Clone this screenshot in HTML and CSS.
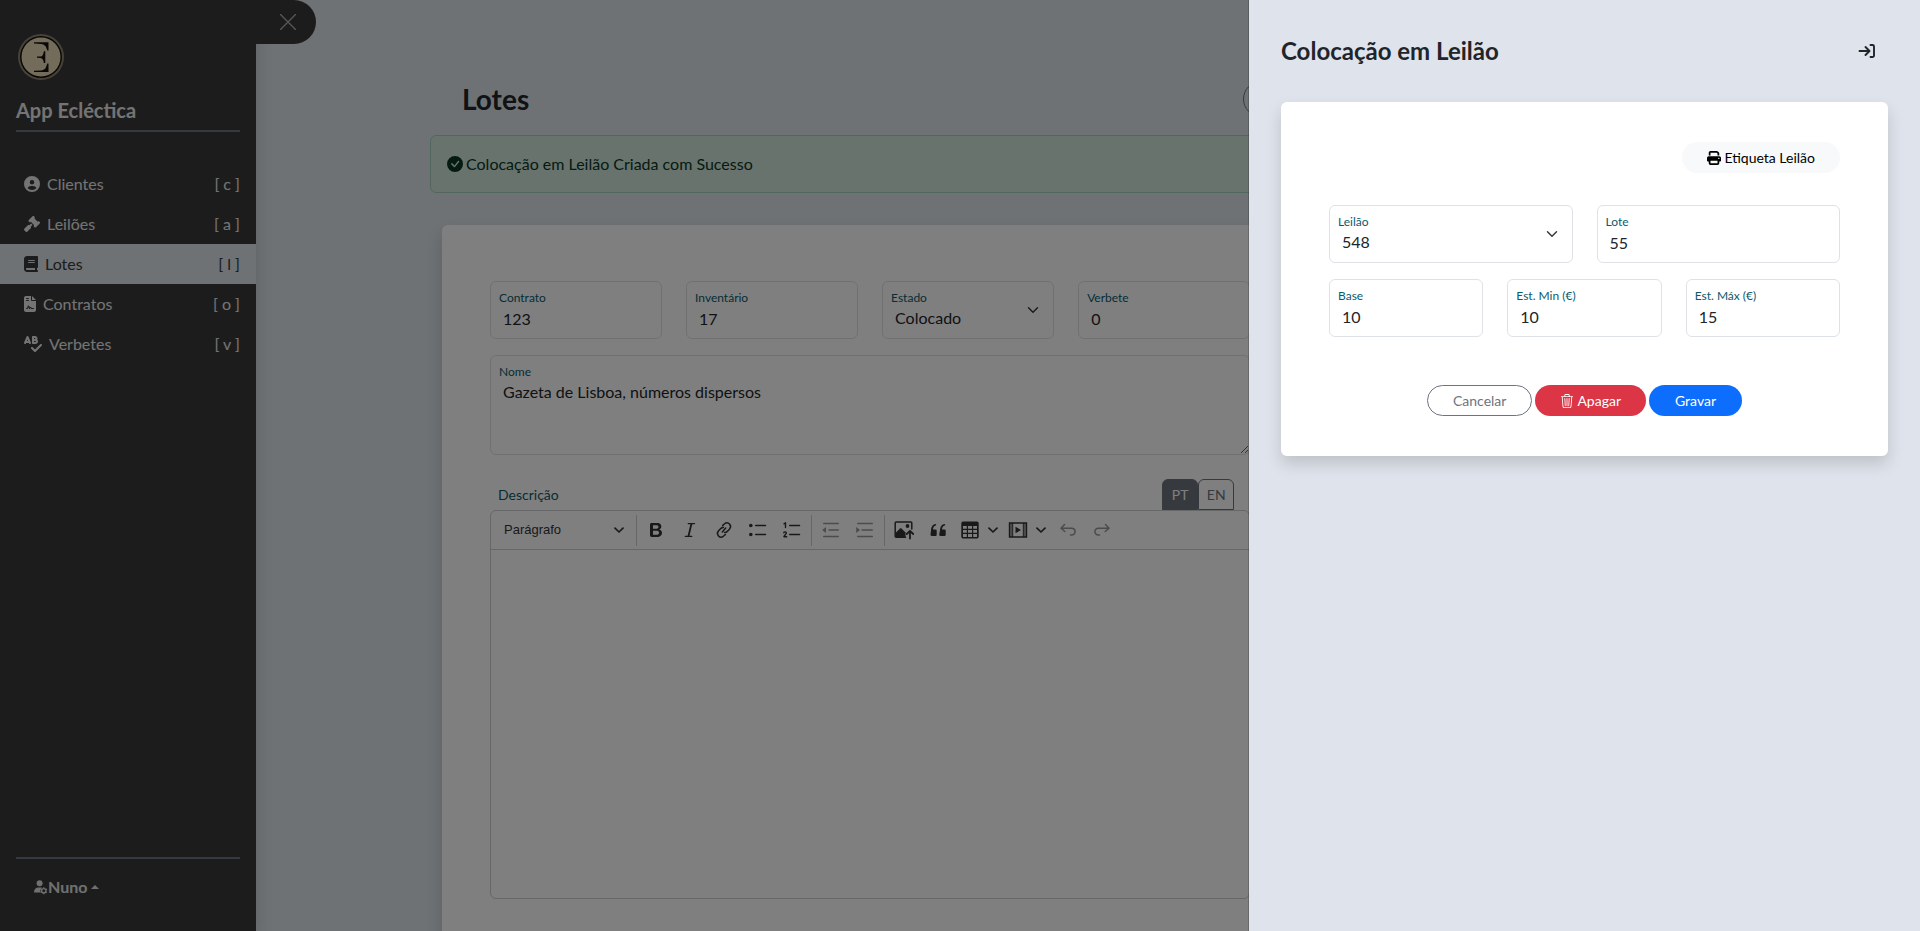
FILE: index.html
```html
<!DOCTYPE html>
<html lang="pt">
<head>
<meta charset="utf-8">
<title>App Ecléctica</title>
<meta name="viewport" content="width=device-width, initial-scale=1">
<link rel="stylesheet" href="styles.css">
</head>
<body>
<div class="app">
  <aside class="sidebar">
    <svg class="logo" viewBox="0 0 46 46" aria-hidden="true">
      <circle cx="23" cy="23" r="23" fill="#8f8571"/>
      <circle cx="23" cy="23" r="21" fill="#14110c"/>
      <circle cx="23" cy="23" r="19.500" fill="#e8d9b6"/>
      <path d="M16 8.300H30.500V16.500H29.300C28.800 12.500 26.500 10.200 23 9.900L16 9.600ZM16 38H30.500V29.500H29.300C28.800 34 26.500 36.100 23 36.400L16 36.700ZM26.500 9H30.500V16.500H29.300ZM26.500 37H30.500V29.500H29.300ZM19 22.600H22.500C24.500 22.500 25.600 20 25.800 17.200H27.300V29H25.800C25.600 26 24.500 24.200 22.500 24L19 23.800Z" fill="#14110c"/>
    </svg>
    <h2 class="brand">App Ecléctica</h2>
    <nav class="menu">
      <a class="menu-item" href="#clientes">
        <svg width="16" height="16" viewBox="0 0 512 512"><path d="M399 384.200C376.900 345.800 335.400 320 288 320H224c-47.400 0-88.900 25.800-111 64.200c35.200 39.200 86.200 63.800 143 63.800s107.800-24.700 143-63.800zM0 256a256 256 0 1 1 512 0A256 256 0 1 1 0 256zm256 16a72 72 0 1 0 0-144 72 72 0 1 0 0 144z"/></svg>
        <span>Clientes</span><span class="key">[ c ]</span>
      </a>
      <a class="menu-item" href="#leiloes">
        <svg width="16" height="16" viewBox="0 0 512 512"><path d="M318.600 9.400c-12.500-12.500-32.800-12.500-45.300 0l-120 120c-12.500 12.500-12.500 32.800 0 45.300l16 16c12.500 12.500 32.800 12.500 45.300 0l4-4L325.400 293.400l-4 4c-12.500 12.500-12.500 32.800 0 45.300l16 16c12.500 12.500 32.800 12.500 45.300 0l120-120c12.500-12.500 12.500-32.800 0-45.300l-16-16c-12.500-12.500-32.800-12.500-45.300 0l-4 4L330.600 74.600l4-4c12.500-12.500 12.500-32.800 0-45.300l-16-16zm-152 288c-12.500-12.500-32.800-12.500-45.300 0l-112 112c-12.500 12.500-12.500 32.800 0 45.300l48 48c12.500 12.500 32.800 12.500 45.300 0l112-112c12.500-12.500 12.500-32.800 0-45.300l-1.400-1.400L272 285.300 226.700 240 168 298.700l-1.400-1.400z"/></svg>
        <span>Leilões</span><span class="key">[ a ]</span>
      </a>
      <a class="menu-item active" href="#lotes" aria-current="page">
        <svg width="14" height="16" viewBox="0 0 448 512"><path d="M96 0C43 0 0 43 0 96V416c0 53 43 96 96 96H384h32c17.700 0 32-14.300 32-32s-14.300-32-32-32V384c17.700 0 32-14.300 32-32V32c0-17.700-14.300-32-32-32H384 96zm0 384H352v64H96c-17.700 0-32-14.300-32-32s14.300-32 32-32zm32-240c0-8.800 7.200-16 16-16H336c8.800 0 16 7.200 16 16s-7.200 16-16 16H144c-8.800 0-16-7.200-16-16zm16 48H336c8.800 0 16 7.200 16 16s-7.200 16-16 16H144c-8.800 0-16-7.200-16-16s7.200-16 16-16z"/></svg>
        <span>Lotes</span><span class="key">[ l ]</span>
      </a>
      <a class="menu-item" href="#contratos">
        <svg width="12" height="16" viewBox="0 0 384 512"><path d="M64 0C28.700 0 0 28.700 0 64V448c0 35.300 28.700 64 64 64H320c35.300 0 64-28.700 64-64V160H256c-17.700 0-32-14.300-32-32V0H64zM256 0V128H384L256 0zM80 64h64c8.800 0 16 7.200 16 16s-7.200 16-16 16H80c-8.800 0-16-7.200-16-16s7.200-16 16-16zm0 64h64c8.800 0 16 7.200 16 16s-7.200 16-16 16H80c-8.800 0-16-7.200-16-16s7.200-16 16-16zm54.200 253.800c-6.100 20.300-24.800 34.200-46 34.200H80c-8.800 0-16-7.200-16-16s7.200-16 16-16h8.200c7.100 0 13.300-4.600 15.300-11.400l14.900-49.500c3.400-11.300 13.800-19.100 25.600-19.100s22.200 7.700 25.600 19.100l11.600 38.600c7.400-6.200 16.800-9.700 26.800-9.700c15.900 0 30.400 9 37.500 23.200l4.400 8.800H304c8.800 0 16 7.200 16 16s-7.200 16-16 16H240c-6.100 0-11.600-3.400-14.300-8.800l-8.800-17.700c-1.700-3.400-5.100-5.500-8.800-5.500s-7.200 2.100-8.800 5.500l-8.800 17.700c-2.900 5.900-9.200 9.400-15.700 8.800s-12.100-5.100-13.900-11.300L144 349l-9.800 32.800z"/></svg>
        <span>Contratos</span><span class="key">[ o ]</span>
      </a>
      <a class="menu-item" href="#verbetes">
        <svg width="18" height="16" viewBox="0 0 576 512"><path d="M112 0C99.100 0 87.400 7.800 82.500 19.700l-66.700 160-13.300 32c-6.800 16.300 .9 35 17.200 41.800s35-.9 41.800-17.200L66.700 224h90.700l5.100 12.300c6.800 16.300 25.500 24 41.800 17.200s24-25.500 17.200-41.800l-13.300-32-66.700-160C136.600 7.800 124.900 0 112 0zm18.700 160H93.300L112 115.200 130.700 160zM256 32v96 96c0 17.700 14.300 32 32 32h80c44.200 0 80-35.800 80-80c0-23.100-9.800-43.800-25.400-58.400c6-11.200 9.400-24 9.400-37.600c0-44.200-35.800-80-80-80H288c-17.700 0-32 14.300-32 32zm96 64H320V64h32c8.800 0 16 7.200 16 16s-7.200 16-16 16zm-32 64h32 16c8.800 0 16 7.200 16 16s-7.200 16-16 16H320V160zM566.600 310.600c12.500-12.500 12.500-32.800 0-45.300s-32.800-12.500-45.300 0L352 434.700l-73.400-73.400c-12.500-12.500-32.800-12.500-45.300 0s-12.500 32.800 0 45.300l96 96c12.500 12.500 32.800 12.500 45.300 0l192-192z"/></svg>
        <span>Verbetes</span><span class="key">[ v ]</span>
      </a>
    </nav>
    <div class="user">
      <button class="user-btn" type="button">
        <svg width="14" height="16" viewBox="0 0 15 16"><circle cx="6" cy="4" r="3.200"/><path d="M0 13.800C0 10.500 2 8.600 5 8.600H7.300C7.900 8.600 8.200 8.700 8.500 8.900C7 10.200 6.600 12 7.100 13.800Z"/><circle cx="10.500" cy="12" r="2.300" fill="none" stroke="currentColor" stroke-width="1.400"/><path d="M10.500 8.200V9.600M10.500 14.400V15.800M7.200 10.100L8.400 10.800M12.600 13.200L13.800 13.900M7.200 13.900L8.400 13.200M12.600 10.800L13.800 10.100" stroke="currentColor" stroke-width="1.400"/></svg>
        <span>Nuno</span><i class="caret"></i>
      </button>
    </div>
  </aside>
  <button class="sidebar-toggle" type="button" aria-label="Fechar menu">
    <svg width="16" height="16" viewBox="0 0 16 16"><path d="M.5.500L15.500 15.500M15.500.500L.5 15.500" stroke="currentColor" stroke-width="1.400" stroke-linecap="round"/></svg>
  </button>

  <main class="main">
    <div class="container">
      <header class="page-head">
        <h1 class="page-title">Lotes</h1>
        <div><button class="round-btn" type="button" aria-label="Opções"></button></div>
      </header>
      <div class="alert" role="alert">
        <svg width="16" height="16" viewBox="0 0 16 16"><path d="M16 8A8 8 0 1 1 0 8a8 8 0 0 1 16 0m-3.970-3.030a.75.750 0 0 0-1.080.022L7.477 9.417 5.384 7.323a.75.750 0 0 0-1.060 1.060L6.970 11.030a.75.750 0 0 0 1.079-.02l3.992-4.990a.75.750 0 0 0-.010-1.050z"/></svg>
        <span>Colocação em Leilão Criada com Sucesso</span>
      </div>
      <section class="card lot-card">
        <form class="lot-form">
          <div class="row cols-4">
            <div class="field"><label for="contrato">Contrato</label><input id="contrato" type="text" value="123"></div>
            <div class="field"><label for="inventario">Inventário</label><input id="inventario" type="text" value="17"></div>
            <div class="field"><label for="estado">Estado</label><select id="estado"><option>Colocado</option></select>
              <svg class="chevron" width="12" height="12" viewBox="0 0 16 16"><path d="m2 5 6 6 6-6"/></svg></div>
            <div class="field"><label for="verbete">Verbete</label><input id="verbete" type="text" value="0"></div>
          </div>
          <div class="field"><label for="nome">Nome</label><textarea id="nome">Gazeta de Lisboa, números dispersos</textarea></div>
          <div class="editor-block">
            <div class="editor-head">
              <span class="editor-label" id="descricao">Descrição</span>
              <div class="tabs">
                <button class="tab tab-on" type="button">PT</button><button class="tab" type="button">EN</button>
              </div>
            </div>
            <div class="editor">
              <div class="toolbar">
                <button class="heading-btn" type="button"><span>Parágrafo</span><svg width="10" height="10" viewBox="0 0 10 10"><path class="ln" d="M1 3.200L5 7L9 3.200" stroke-width="1.700"/></svg></button>
                <i class="sep"></i>
                <button class="tool" type="button" aria-label="Negrito"><svg width="20" height="20" viewBox="0 0 20 20"><path d="M10.187 17H5.773c-.637 0-1.092-.138-1.364-.415-.273-.277-.409-.718-.409-1.323V4.738c0-.617.140-1.062.419-1.332.279-.270.730-.406 1.354-.406h4.680c.690 0 1.288.041 1.793.124.506.083.960.242 1.360.478.341.197.644.447.906.750a3.262 3.262 0 0 1 .808 2.162c0 1.401-.722 2.426-2.167 3.075C15.050 10.175 16 11.315 16 13.010a3.756 3.756 0 0 1-2.296 3.504 6.100 6.100 0 0 1-1.517.377c-.571.073-1.238.110-2 .110zm-.217-6.217H7v4.087h3.069c1.977 0 2.965-.690 2.965-2.072 0-.707-.256-1.220-.768-1.537-.512-.319-1.277-.478-2.296-.478zM7 5.130v3.619h2.606c.729 0 1.292-.067 1.690-.2a1.600 1.600 0 0 0 .910-.765c.165-.267.247-.566.247-.897 0-.707-.260-1.176-.778-1.409-.519-.232-1.310-.348-2.375-.348H7z"/></svg></button>
                <button class="tool" type="button" aria-label="Itálico"><svg width="20" height="20" viewBox="0 0 20 20"><path class="ln" d="M8.200 3.600H14.600M5.300 16.400H11.800" stroke-width="1.200"/><path class="ln" d="M11.400 4L8.500 16" stroke-width="1.800"/></svg></button>
                <button class="tool" type="button" aria-label="Ligação"><svg width="20" height="20" viewBox="0 0 20 20"><path class="ln" d="M8.600 5.600L10.600 3.800C12 2.600 14.200 2.700 15.500 4.100C16.800 5.500 16.800 7.500 15.600 8.900L13.300 11.400C12.500 12.200 11.600 12.600 10.600 12.500M11.400 14.500L9.400 16.200C8 17.400 5.800 17.300 4.500 15.900C3.200 14.500 3.200 12.500 4.400 11.100L6.700 8.600C7.500 7.800 8.400 7.400 9.400 7.500M8.300 12L11.700 8" stroke-width="1.500"/></svg></button>
                <button class="tool" type="button" aria-label="Lista"><svg width="20" height="20" viewBox="0 0 20 20"><circle cx="2.800" cy="5.500" r="1.800"/><circle cx="2.800" cy="14.500" r="1.800"/><path class="ln" d="M7.700 5.500H17.500M7.700 14.500H17.500" stroke-width="1.500"/></svg></button>
                <button class="tool" type="button" aria-label="Lista numerada"><svg width="20" height="20" viewBox="0 0 20 20"><path class="ln" d="M2 3.800L3.500 2.800V7.500M1.700 12.700C2.200 11.600 4.300 11.600 4.300 13C4.300 14.200 2.400 15 1.900 16.700H4.700" stroke-width="1.400"/><path class="ln" d="M7.700 5.500H17.500M7.700 14.500H17.500" stroke-width="1.500"/></svg></button>
                <i class="sep"></i>
                <button class="tool off" type="button" disabled aria-label="Diminuir avanço"><svg width="20" height="20" viewBox="0 0 20 20"><path class="ln" d="M2.700 3.500H17.300M8 10H17.300M2.700 16.500H17.300" stroke-width="1.400"/><path d="M1.200 10L5 7V13Z"/></svg></button>
                <button class="tool off" type="button" disabled aria-label="Aumentar avanço"><svg width="20" height="20" viewBox="0 0 20 20"><path class="ln" d="M2.700 3.500H17.300M7 10H17.300M2.700 16.500H17.300" stroke-width="1.400"/><path d="M5 10L1.200 7V13Z"/></svg></button>
                <i class="sep"></i>
                <button class="tool" type="button" aria-label="Imagem"><svg width="20" height="20" viewBox="0 0 20 20"><path class="ln" d="M11.500 17.200H2.200A1 1 0 0 1 1.200 16.200V3A1 1 0 0 1 2.200 2H16.800A1 1 0 0 1 17.800 3V9" stroke-width="1.500"/><circle cx="13.500" cy="6" r="1.900"/><path d="M1.500 13L6 8.500C6.500 8 7 8 7.500 8.500L11.500 12.500V17.500H1.500Z"/><path class="ln" d="M16 18.500V11.500M12.800 14L16 10.800L19.200 14" stroke-width="1.800"/></svg></button>
                <button class="tool" type="button" aria-label="Citação"><svg width="20" height="20" viewBox="0 0 20 20"><path d="M3 10.400A4.500 6.500 0 0 1 7.500 3.900C8.400 3.900 8.400 5.200 7.700 5.400C5.900 6 5 7.500 5 9.400H7.500A1.200 1.200 0 0 1 8.700 10.600V14.800A1.200 1.200 0 0 1 7.500 16H4A1.500 1.500 0 0 1 2.500 14.500ZM12 10.400A4.500 6.500 0 0 1 16.500 3.900C17.400 3.900 17.400 5.200 16.700 5.400C14.900 6 14 7.500 14 9.400H16.500A1.200 1.200 0 0 1 17.700 10.600V14.800A1.200 1.200 0 0 1 16.500 16H12.700A1.500 1.500 0 0 1 11.200 14.500Z"/></svg></button>
                <span class="split">
                  <button class="tool" type="button" aria-label="Tabela"><svg width="20" height="20" viewBox="0 0 20 20"><path fill-rule="evenodd" d="M3 1.500H17A1.700 1.700 0 0 1 18.700 3.200V16.800A1.700 1.700 0 0 1 17 18.500H3A1.700 1.700 0 0 1 1.300 16.800V3.200A1.700 1.700 0 0 1 3 1.500ZM3 6V8.800H6.800V6ZM8 6V8.800H12V6ZM13.200 6V8.800H17V6ZM3 10V12.800H6.800V10ZM8 10V12.800H12V10ZM13.200 10V12.800H17V10ZM3 14V16.900H6.800V14ZM8 14V16.900H12V14ZM13.200 14V16.900H17V14Z"/></svg></button>
                  <button class="arrow" type="button" aria-label="Opções de tabela"><svg width="10" height="10" viewBox="0 0 10 10"><path class="ln" d="M1 3.200L5 7L9 3.200" stroke-width="1.700"/></svg></button>
                </span>
                <span class="split">
                  <button class="tool" type="button" aria-label="Multimédia"><svg width="20" height="20" viewBox="0 0 20 20"><path d="M1.500 3H18.500V17H1.500Z" fill="none" stroke="currentColor" stroke-width="1.400"/><path d="M3.200 3V17M16.800 3V17" stroke="currentColor" stroke-width="2" opacity=".5"/><path d="M4.700 3V17M15.300 3V17" stroke="currentColor" stroke-width="1"/><path d="M7.500 6.800L13 10L7.500 13.200Z"/></svg></button>
                  <button class="arrow" type="button" aria-label="Opções de multimédia"><svg width="10" height="10" viewBox="0 0 10 10"><path class="ln" d="M1 3.200L5 7L9 3.200" stroke-width="1.700"/></svg></button>
                </span>
                <button class="tool off" type="button" disabled aria-label="Anular"><svg width="20" height="20" viewBox="0 0 20 20"><path class="ln" d="M6.500 4.500L3 8.200L6.800 11.500M3.200 8.200H13.500C18.300 8.200 18.300 15 13.500 15H12.500" stroke-width="1.500"/></svg></button>
                <button class="tool off" type="button" disabled aria-label="Refazer"><svg width="20" height="20" viewBox="0 0 20 20"><path class="ln" d="M13.500 4.500L17 8.200L13.200 11.500M16.800 8.200H6.500C1.700 8.200 1.700 15 6.500 15H7.500" stroke-width="1.500"/></svg></button>
              </div>
              <div class="editor-body" contenteditable="true" role="textbox" aria-labelledby="descricao"></div>
            </div>
          </div>
        </form>
      </section>
    </div>
  </main>
</div>

<div class="backdrop"></div>

<aside class="panel">
  <header class="panel-head">
    <h2 class="panel-title">Colocação em Leilão</h2>
    <button class="panel-close" type="button" aria-label="Fechar">
      <svg width="18" height="16" viewBox="0 0 18 16"><path d="M1.500 8H11M7.500 4L11.500 8L7.500 12M12.500 2H14.500A1.500 1.500 0 0 1 16 3.500V12.500A1.500 1.500 0 0 1 14.500 14H12.500" fill="none" stroke="currentColor" stroke-width="1.900" stroke-linecap="round" stroke-linejoin="round"/></svg>
    </button>
  </header>
  <section class="card panel-card">
    <div class="print-row">
      <button class="btn btn-light" type="button"><svg width="14" height="14" viewBox="0 0 512 512"><path d="M128 0C92.700 0 64 28.700 64 64v96h64V64H354.700L384 93.300V160h64V93.300c0-17-6.700-33.300-18.700-45.300L400 18.700C388 6.700 371.700 0 354.700 0H128zM384 352v32 64H128V384 368 352H384zm64 32h32c17.700 0 32-14.300 32-32V256c0-35.300-28.700-64-64-64H64c-35.300 0-64 28.700-64 64v96c0 17.700 14.300 32 32 32H64v64c0 35.300 28.700 64 64 64H384c35.300 0 64-28.700 64-64V384zM432 248a24 24 0 1 1 0 48 24 24 0 1 1 0-48z"/></svg><span>Etiqueta Leilão</span></button>
    </div>
    <form class="panel-form">
      <div class="row cols-2">
        <div class="field"><label for="leilao">Leilão</label><select id="leilao"><option>548</option></select>
          <svg class="chevron" width="12" height="12" viewBox="0 0 16 16"><path d="m2 5 6 6 6-6"/></svg></div>
        <div class="field"><label for="lote">Lote</label><input id="lote" type="text" value="55"></div>
      </div>
      <div class="row cols-3">
        <div class="field"><label for="base">Base</label><input id="base" type="text" value="10"></div>
        <div class="field"><label for="estmin">Est. Min (€)</label><input id="estmin" type="text" value="10"></div>
        <div class="field"><label for="estmax">Est. Máx (€)</label><input id="estmax" type="text" value="15"></div>
      </div>
      <div class="actions">
        <button class="btn btn-outline" type="button">Cancelar</button>
        <button class="btn btn-danger" type="button"><svg width="14" height="14" viewBox="0 0 16 16"><path d="M6.500 1h3a.5.500 0 0 1 .5.500v1H6v-1a.5.500 0 0 1 .5-.5M11 2.500v-1A1.500 1.500 0 0 0 9.500 0h-3A1.500 1.500 0 0 0 5 1.500v1H1.500a.5.500 0 0 0 0 1h.538l.853 10.660A2 2 0 0 0 4.885 16h6.230a2 2 0 0 0 1.994-1.840l.853-10.660h.538a.5.500 0 0 0 0-1zm1.958 1-.846 10.580a1 1 0 0 1-.997.920h-6.230a1 1 0 0 1-.997-.920L3.042 3.500zm-7.487 1a.5.500 0 0 1 .528.470l.5 8.500a.5.500 0 0 1-.998.060L5 5.030a.5.500 0 0 1 .470-.530zm5.058 0a.5.500 0 0 1 .470.530l-.5 8.500a.5.500 0 1 1-.998-.060l.5-8.500a.5.500 0 0 1 .528-.470M8 4.500a.5.500 0 0 1 .5.500v8.500a.5.500 0 0 1-1 0V5a.5.500 0 0 1 .5-.5"/></svg><span>Apagar</span></button>
        <button class="btn btn-primary" type="button">Gravar</button>
      </div>
    </form>
  </section>
</aside>
</body>
</html>
```

FILE: styles.css
```css
*, *::before, *::after { box-sizing: border-box; }

body {
  margin: 0;
  height: 100vh;
  overflow: hidden;
  background: #dde4e9;
  color: #212529;
  font: 16px/24px Lato, "Liberation Sans", sans-serif;
}

h1, h2 { margin: 0; }
button, input, select, textarea { font: inherit; color: inherit; }
button { padding: 0; border: 0; background: none; cursor: pointer; }
svg { display: block; flex: none; fill: currentColor; }
.ln { fill: none; stroke: currentColor; stroke-linecap: round; stroke-linejoin: round; }

.app { display: flex; align-items: flex-start; height: 100%; }

/* Sidebar */
.sidebar {
  flex: none;
  display: flex;
  flex-direction: column;
  width: 256px;
  height: 100%;
  padding-top: 34px;
  background: #393939;
  color: #fff;
  box-shadow: 0 8px 16px rgba(0, 0, 0, .15);
}
.logo { width: 46px; height: 46px; margin-left: 18px; }
.brand {
  margin: 16px 16px 0;
  padding-bottom: 6px;
  border-bottom: 2px solid #68747e;
  color: #e9e9e9;
  font-size: 20px;
  font-weight: 700;
  line-height: 28px;
}
.menu { margin-top: 32px; }
.menu-item {
  display: flex;
  align-items: center;
  gap: 7px;
  height: 40px;
  padding: 0 16px 0 24px;
  color: #e9e9e9;
  text-decoration: none;
}
.menu-item.active { background: #dde4e9; color: #393939; }
.key { margin-left: auto; }
.user {
  margin: auto 16px 0;
  height: 74px;
  padding: 16px 18px;
  border-top: 2px solid #68747e;
}
.user-btn {
  display: flex;
  align-items: center;
  color: #e0e0e0;
  font-weight: 700;
}
.caret {
  margin-left: 4px;
  border: 4px solid transparent;
  border-top-width: 0;
  border-bottom-color: currentColor;
}
.sidebar-toggle {
  flex: none;
  display: flex;
  align-items: center;
  width: 60px;
  height: 44px;
  margin-right: -60px;
  padding-left: 24px;
  border-radius: 0 22px 22px 0;
  background: #393939;
  color: #adadb5;
}

/* Main page */
.main { flex: 1; min-width: 0; padding: 79px 24px 0; }
.container { max-width: 1316px; margin: 0 auto; }
.page-head {
  display: grid;
  grid-template-columns: 1fr 471px;
  align-items: center;
  padding: 0 32px 16px;
}
.page-title { font-size: 28px; font-weight: 700; line-height: 40px; }
.round-btn {
  display: block;
  width: 36px;
  height: 36px;
  border: 1px solid #6c757d;
  border-radius: 18px;
}
.alert {
  display: flex;
  align-items: center;
  gap: 3px;
  margin-bottom: 32px;
  padding: 16px;
  border: 1px solid #a3cfbb;
  border-radius: 6px;
  background: #d1e7dd;
  color: #0a3622;
}
.card {
  border-radius: 6px;
  background: #fff;
  box-shadow: 0 8px 16px rgba(0, 0, 0, .15);
}
.lot-card {
  display: grid;
  grid-template-columns: 24fr 13fr;
  gap: 24px;
  margin: 0 12px;
  padding: 56px 48px;
}
.lot-form, .panel-form { display: flex; flex-direction: column; gap: 16px; }
.row { display: grid; gap: 24px; }
.cols-2 { grid-template-columns: repeat(2, 1fr); }
.cols-3 { grid-template-columns: repeat(3, 1fr); }
.cols-4 { grid-template-columns: repeat(4, 1fr); }

/* Boxed field with its label inside the border */
.field {
  position: relative;
  min-width: 0;
  padding-top: 8px;
  border: 1px solid #dee2e6;
  border-radius: 6px;
}
.field label {
  display: block;
  padding-left: 8px;
  color: #0c5b6c;
  font-size: 12px;
  line-height: 16px;
}
.field input, .field select, .field textarea {
  display: block;
  width: 100%;
  height: 32px;
  margin: 0;
  padding: 0 12px 8px;
  border: 0;
  outline: 0;
  background: none;
  appearance: none;
}
.field textarea { height: 74px; resize: vertical; }
.field select { padding-bottom: 9px; }
.chevron {
  position: absolute;
  top: 22px;
  right: 14px;
  pointer-events: none;
  fill: none;
  stroke: #343a40;
  stroke-width: 2;
  stroke-linecap: round;
  stroke-linejoin: round;
}

/* Rich text editor */
.editor-block { padding-top: 8px; }
.editor-head { display: flex; justify-content: space-between; align-items: center; padding: 0 16px 0 8px; }
.editor-label { color: #0c5b6c; font-size: 14px; }
.tabs { display: flex; }
.tab {
  width: 36px;
  height: 31px;
  border: 1px solid #6c757d;
  border-radius: 6px 6px 0 0;
  color: #6c757d;
  font-size: 14px;
}
.tab-on { background: #6c757d; color: #fff; }
.editor { border: 1px solid #ccced1; border-radius: 6px; }
.toolbar {
  display: flex;
  align-items: center;
  gap: 2px;
  height: 39px;
  padding: 0 3px;
  border-bottom: 1px solid #ccced1;
  color: #333;
}
.heading-btn {
  display: flex;
  justify-content: space-between;
  align-items: center;
  width: 139px;
  height: 32px;
  padding: 0 9px 0 10px;
  font: 13px/20px "Liberation Sans", Arial, sans-serif;
}
.sep { width: 1px; height: 31px; margin: 0 1px; background: #ccced1; }
.tool { display: grid; place-items: center; width: 32px; height: 32px; }
.tool.off { opacity: .5; }
.split { display: flex; align-items: center; }
.split .tool { width: 28px; }
.arrow { display: grid; place-items: center; width: 18px; height: 32px; }
.editor-body { height: 348px; outline: 0; }

.backdrop { position: fixed; inset: 0; background: rgba(0, 0, 0, .5); }

/* Side panel */
.panel {
  position: fixed;
  inset: 0 0 0 auto;
  width: 35%;
  padding: 32px;
  border-left: 1px solid rgba(0, 0, 0, .175);
  background: #dfe3eb;
  background-clip: padding-box;
}
.panel-head {
  display: flex;
  justify-content: space-between;
  align-items: center;
  padding: 0 12px 32px 0;
}
.panel-title { font-size: 24px; font-weight: 700; line-height: 38px; }
.panel-card { padding: 40px 48px; }
.print-row { display: flex; justify-content: flex-end; margin-bottom: 32px; }
.actions { display: flex; justify-content: center; gap: 3px; padding-top: 32px; }
.btn {
  display: flex;
  align-items: center;
  gap: 3px;
  padding: 4px 24px;
  border: 1px solid transparent;
  border-radius: 16px;
  font-size: 14px;
  line-height: 21px;
}
.btn-light { background: #f8f9fa; color: #000; }
.btn-outline { padding: 4px 25px; border-color: #6c757d; color: #6c757d; }
.btn-danger { background: #dc3545; color: #fff; }
.btn-primary { padding: 4px 25px; background: #0d6efd; color: #fff; }
```
